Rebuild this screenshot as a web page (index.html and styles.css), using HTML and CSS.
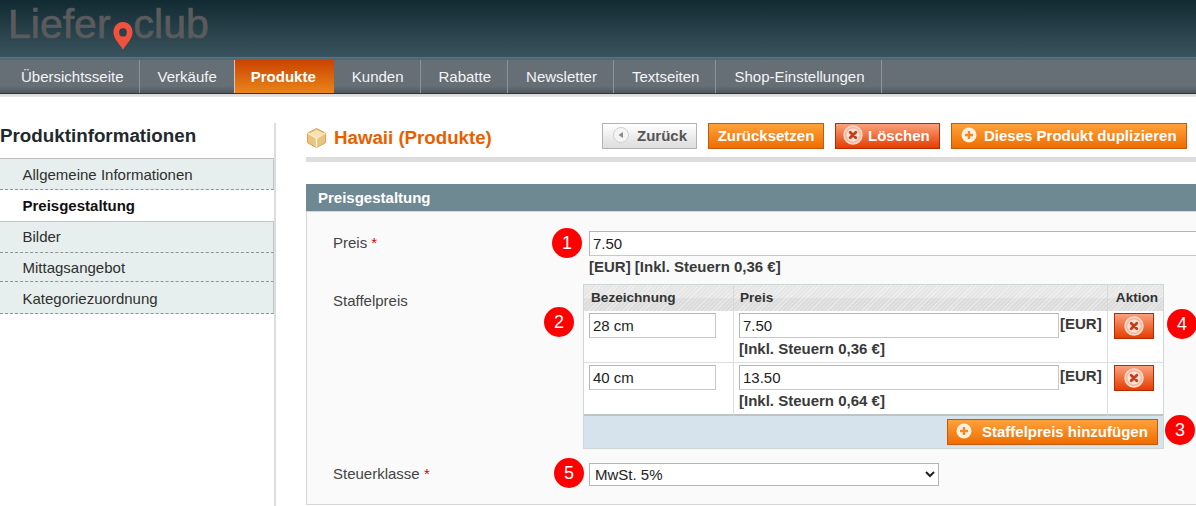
FILE: index.html
```html
<!DOCTYPE html>
<html lang="de">
<head>
<meta charset="utf-8">
<title>Hawaii (Produkte)</title>
<link rel="stylesheet" href="styles.css">
</head>
<body>
<header class="top">
  <div class="logo"><span>Liefer</span><svg class="pin" width="20" height="28" viewBox="0 0 22 28" preserveAspectRatio="none"><path fill-rule="evenodd" fill="#f0523d" d="M11 0C4.900 0 .5 4.500.5 10.300c0 6.500 6.500 11.500 10.500 17.500 4-6 10.500-11 10.500-17.500C21.500 4.500 17.100 0 11 0zm0 6.200a4.200 4.200 0 1 1 0 8.400 4.200 4.200 0 0 1 0-8.400z"/></svg><span>club</span></div>
</header>
<nav class="nav">
  <a class="nav-item">Übersichtsseite</a>
  <a class="nav-item">Verkäufe</a>
  <a class="nav-item active">Produkte</a>
  <a class="nav-item">Kunden</a>
  <a class="nav-item">Rabatte</a>
  <a class="nav-item">Newsletter</a>
  <a class="nav-item">Textseiten</a>
  <a class="nav-item">Shop-Einstellungen</a>
</nav>
<div class="page">
  <aside class="side">
    <h3>Produktinformationen</h3>
    <ul class="tabs">
      <li class="tab first">Allgemeine Informationen</li>
      <li class="tab current">Preisgestaltung</li>
      <li class="tab after">Bilder</li>
      <li class="tab">Mittagsangebot</li>
      <li class="tab">Kategoriezuordnung</li>
    </ul>
  </aside>
  <main class="main">
    <div class="head">
      <svg class="box" width="21" height="22" viewBox="0 0 22 22"><path d="M11 1l9.500 5v10L11 21l-9.500-5V6z" fill="#e9c47f" stroke="#d3a356"/><path d="M11 11l9-5M11 11L2 6M11 11v10" stroke="#fbf0d4" stroke-width="1.500" fill="none"/><path d="M11 2.500L19 6.500 11 10.500 3 6.500z" fill="#f7e3b2"/></svg>
      <h1>Hawaii (Produkte)</h1>
      <div class="actions">
        <button class="btn back"><svg width="16" height="16" viewBox="0 0 16 16"><circle cx="8" cy="8" r="7.500" fill="#f4f4f4" stroke="#d0d0d0"/><path d="M10 5v6L5.500 8z" fill="#8a8a8a"/></svg>Zurück</button>
        <button class="btn orange plain">Zurücksetzen</button>
        <button class="btn red"><svg width="20" height="20" viewBox="0 0 20 20"><use href="#x-icon"/></svg>Löschen</button>
        <button class="btn orange dup"><svg width="16" height="16" viewBox="0 0 16 16"><use href="#plus-icon"/></svg>Dieses Produkt duplizieren</button>
      </div>
    </div>
    <section class="panel">
      <h2>Preisgestaltung</h2>
      <div class="fields">
        <div class="row price-row">
          <label>Preis <em>*</em></label>
          <div class="value">
            <span class="badge b1">1</span>
            <input class="text wide" value="7.50">
            <p class="note">[EUR] [Inkl. Steuern 0,36 €]</p>
          </div>
        </div>
        <div class="row tier-row">
          <label>Staffelpreis</label>
          <div class="value">
            <span class="badge b2">2</span>
            <span class="badge b4">4</span>
            <span class="badge b3">3</span>
            <table class="tiers">
              <thead>
                <tr><th class="c1">Bezeichnung</th><th class="c2">Preis</th><th class="c3">Aktion</th></tr>
              </thead>
              <tbody>
                <tr>
                  <td><input class="text name" value="28 cm"></td>
                  <td><div class="pr"><input class="text amount" value="7.50"><b>[EUR]</b></div><p class="note">[Inkl. Steuern 0,36 €]</p></td>
                  <td><button class="btn red del"><svg width="20" height="20" viewBox="0 0 20 20"><use href="#x-icon"/></svg></button></td>
                </tr>
                <tr>
                  <td><input class="text name" value="40 cm"></td>
                  <td><div class="pr"><input class="text amount" value="13.50"><b>[EUR]</b></div><p class="note">[Inkl. Steuern 0,64 €]</p></td>
                  <td><button class="btn red del"><svg width="20" height="20" viewBox="0 0 20 20"><use href="#x-icon"/></svg></button></td>
                </tr>
              </tbody>
              <tfoot>
                <tr><td colspan="3"><button class="btn orange add"><svg width="16" height="16" viewBox="0 0 16 16"><use href="#plus-icon"/></svg>Staffelpreis hinzufügen</button></td></tr>
              </tfoot>
            </table>
          </div>
        </div>
        <div class="row tax-row">
          <label>Steuerklasse <em>*</em></label>
          <div class="value">
            <span class="badge b5">5</span>
            <select class="sel"><option>MwSt. 5%</option></select>
          </div>
        </div>
      </div>
    </section>
  </main>
</div>
<svg class="defs" width="0" height="0">
  <defs>
    <g id="x-icon">
      <circle cx="10" cy="10" r="9" fill="#f6b9a0" stroke="#fbd9c8" stroke-width="1.500"/>
      <circle cx="10" cy="10" r="6.500" fill="#f5e3da"/>
      <path d="M7.200 7.200l5.600 5.600M12.800 7.200l-5.600 5.600" stroke="#c93a16" stroke-width="2.800" stroke-linecap="round"/>
    </g>
    <g id="plus-icon">
      <circle cx="8" cy="8" r="7.500" fill="#fdf1e2"/>
      <path d="M8 4v8M4 8h8" stroke="#f28a2a" stroke-width="2.400"/>
    </g>
  </defs>
</svg>
</body>
</html>
```
FILE: styles.css
```css
* { box-sizing: border-box; }
html, body { margin: 0; padding: 0; height: 506px; overflow: hidden; background: #fff; }
body { font-family: "Liberation Sans", Arial, sans-serif; font-size: 15px; color: #2f2f2f; width: 1196px; }
.defs { position: absolute; }

.top { height: 60px; padding: 6px 0 0 8px; background: linear-gradient(#122a31, #3a545f); border-bottom: 2px solid #4f6a74; box-shadow: inset 0 -1px 0 #5b7580; }
.logo { display: flex; align-items: flex-start; font-size: 41px; line-height: 36px; color: #5a5b5c; -webkit-text-stroke: 0.7px #5a5b5c; }
.pin { margin: 16px 1px 0 2px; flex: none; }

.nav { display: flex; height: 37px; background: linear-gradient(#666e76 0, #666e76 26px, #50575d 33px, #2f3539 33px, #2f3539 34px, #d8d8d8 34px, #e8e8e8 37px); padding-bottom: 3px; }
.nav-item { color: #f2f5f5; font-size: 15px; line-height: 34px; height: 33px; padding: 0 16px 0 18px; border-right: 1px solid #8e9499; }
.nav-item:first-child { padding: 0 15px 0 21px; }
.nav-item:nth-child(2) { padding-right: 17px; border-right-color: #c9c9c9; }
.nav-item.active { background: linear-gradient(#cb4300, #e9851a); color: #fff; font-weight: bold; padding: 0 18px 0 16px; border-right: 0; }

.page { display: flex; height: 409px; padding-top: 26px; }
.side { width: 276px; flex: none; border-right: 2px solid #ddd; height: 383px; }
.side h3 { margin: 0; height: 35px; padding-top: 2px; font-size: 18.800px; line-height: 22px; font-weight: bold; color: #22292d; }
.tabs { list-style: none; margin: 0; padding: 0; }
.tab { height: 31px; padding-left: 22.500px; line-height: 30px; background: #e6efed; border-bottom: 1px dashed #8d9396; border-right: 1px solid #bccacb; font-size: 15px; color: #2f2f2f; }
.tab.first { height: 32px; line-height: 31px; border-top: 1px solid #bdbdbd; }
.tab.current { background: #fff; font-weight: bold; height: 31px; line-height: 31px; color: #111; border-bottom: 0; border-right: 0; }
.tab.after { height: 32px; line-height: 30px; border-top: 1px solid #bdc9c9; }
.tab:nth-child(4) { height: 29px; line-height: 30px; }
.tab:last-child { height: 32px; line-height: 34px; }

.main { flex: 1; min-width: 0; padding-left: 30px; }
.head { position: relative; display: flex; align-items: flex-start; height: 34px; border-bottom: 5px solid #ddd; box-sizing: content-box; }
.box { margin-top: 4px; flex: none; }
.head h1 { margin: 3px 0 0 7px; font-size: 18.700px; line-height: 24px; color: #eb5e00; font-weight: bold; }
.actions { position: absolute; right: 9px; top: 0; display: flex; gap: 11px; }

.btn { display: inline-flex; align-items: center; height: 26px; border: 1px solid #b64a00; font: bold 15px/1 "Liberation Sans", Arial, sans-serif; color: #fff; padding: 0 0 2px; }
.orange { background: linear-gradient(#fea23c, #f06d00); border-color: #c4590c; }
.red { background: linear-gradient(#f9a27c, #e63c00); border-color: #b52c00; }
.back { width: 95px; background: linear-gradient(#fff, #dcdcdc); border-color: #b3b3b3; color: #555; padding-left: 10px; gap: 8px; }
.plain { width: 116px; justify-content: center; }
.red:not(.del) { width: 105px; padding-left: 7px; gap: 5px; }
.dup { width: 236px; padding-left: 9px; gap: 7px; }

.panel { margin-top: 22px; }
.panel h2 { margin: 0; height: 27px; background: #6f8992; color: #fff; font-size: 15px; line-height: 28px; font-weight: bold; padding-left: 12px; }
.fields { background: #fafafa; border: 1px solid #d6d6d6; height: 294px; border-right: 0; padding-top: 19px; position: relative; }
.row { display: flex; }
.row label { width: 282px; padding-left: 26px; flex: none; font-size: 15px; color: #444; line-height: 23px; }
.row em { color: #d40707; font-style: normal; }
.value { position: relative; flex: 1; min-width: 0; }
.text { display: block; height: 25px; border: 1px solid #b5b5b5; border-bottom-color: #c8c8c8; border-right-color: #c8c8c8; background: #fff; font: 15px "Liberation Sans", Arial, sans-serif; color: #222; padding: 0 3px; }
.wide { width: 640px; }
.price-row { height: 53px; }
.note { margin: 0; font-size: 15px; font-weight: bold; color: #3a3a3a; line-height: 16px; white-space: nowrap; }
.price-row .note { margin-top: 3px; }
.tier-row { height: 179px; }
.tier-row label { line-height: 19px; padding-top: 7px; height: 26px; }

.tiers { margin-left: -6px; width: 581px; border-collapse: separate; border-spacing: 0; table-layout: fixed; background: #fff; border: 1px solid #ced6d8; }
.tiers th { height: 26px; padding: 0 0 0 7px; text-align: left; font-size: 13.600px; font-weight: bold; color: #333; line-height: 24px; border-right: 1px solid #d4d8d9; background: repeating-linear-gradient(135deg, rgba(255,255,255,.35) 0 1px, transparent 1px 3px), linear-gradient(#e6e6e6 0, #e6e6e6 13px, #dcdcdc 13px, #dcdcdc); }
.tiers th.c1 { width: 150px; }
.tiers th.c2 { padding-left: 6px; }
.tiers th.c3 { width: 55px; border-right: 0; padding-left: 3px; text-align: center; }
.tiers tbody td { height: 52px; padding: 2px 4px 0 5px; vertical-align: top; border-right: 1px solid #dcdfe0; border-bottom: 1px solid #dcdfe0; }
.tiers tbody td:last-child { border-right: 0; }
.tiers tbody tr:last-child td { border-bottom: 2px solid #bcc4c7; height: 53px; }
.name { width: 127px; }
.pr { display: flex; align-items: flex-start; }
.amount { width: 320px; flex: none; }
.pr b { font-size: 15px; color: #3a3a3a; line-height: 22px; margin-left: 1px; }
.tiers .note { margin-top: 3px; }
.del { width: 40px; height: 26px; justify-content: center; margin-left: 1px; padding: 0; }
.tiers tfoot td { height: 32px; background: #d6e3ec; padding: 3px 5px 0 0; text-align: right; vertical-align: top; }
.add { width: 211px; padding-left: 8px; gap: 10px; }

.tax-row label { line-height: 22px; }
.sel { width: 350px; height: 23px; border: 1px solid #b5b5b5; background: #fff; font: 15px "Liberation Sans", Arial, sans-serif; color: #222; padding: 0 0 0 1px; }

.badge { position: absolute; width: 30px; height: 30px; border-radius: 50%; background: #f00; color: #fff; font-size: 18px; line-height: 30px; text-align: center; }
.b1 { left: -37px; top: -3px; }
.b2 { left: -45px; top: 23px; }
.b4 { left: 578px; top: 25px; }
.b3 { left: 576px; top: 131px; }
.b5 { left: -35px; top: -5px; }
```
